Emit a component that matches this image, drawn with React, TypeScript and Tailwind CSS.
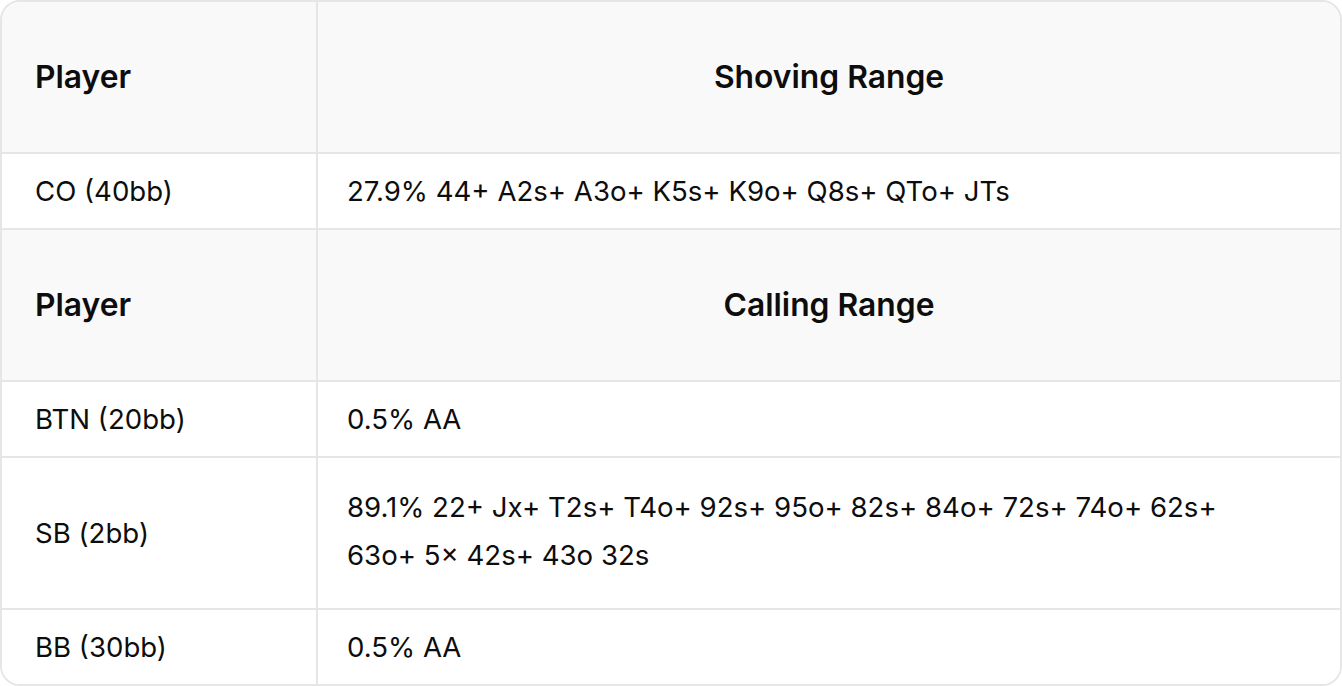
import React from "react";

const font = { fontFamily: "Inter, 'Noto Sans', sans-serif" };

function HeaderRow({ title }: { title: string }) {
  return (
    <div className="grid grid-cols-[314px_2px_1fr] h-[150px] bg-[#f9f9f9]">
      <div className="flex items-center pl-[33px] text-[31.8px] font-semibold text-[#0d0d0d]">Player</div>
      <div className="bg-[#e6e6e6]" />
      <div className="flex items-center justify-center text-[31.8px] font-semibold text-[#0d0d0d]">{title}</div>
    </div>
  );
}

function BodyRow({ player, range, tall }: { player: string; range: string; tall?: boolean }) {
  return (
    <div className={`grid grid-cols-[314px_2px_1fr] bg-white ${tall ? "h-[150px]" : "h-[74px]"}`}>
      <div className="flex items-center pl-[33px] text-[27.6px] leading-[48px] text-[#0d0d0d]">{player}</div>
      <div className="bg-[#e6e6e6]" />
      <div className={`flex items-center pl-[29px] pr-[90px] text-[27.6px] leading-[48px] text-[#0d0d0d] ${tall ? "pb-[4px]" : ""}`}>{range}</div>
    </div>
  );
}

const Divider = () => <div className="h-[2px] bg-[#e6e6e6]" />;

export default function App() {
  return (
    <div className="w-[1342px] h-[686px] bg-white" style={font}>
      <div className="border-2 border-[#e6e6e6] rounded-[20px] overflow-hidden flex flex-col">
        <HeaderRow title="Shoving Range" />
        <Divider />
        <BodyRow player="CO (40bb)" range="27.9% 44+ A2s+ A3o+ K5s+ K9o+ Q8s+ QTo+ JTs" />
        <Divider />
        <HeaderRow title="Calling Range" />
        <Divider />
        <BodyRow player="BTN (20bb)" range="0.5% AA" />
        <Divider />
        <BodyRow
          tall
          player="SB (2bb)"
          range="89.1% 22+ Jx+ T2s+ T4o+ 92s+ 95o+ 82s+ 84o+ 72s+ 74o+ 62s+ 63o+ 5× 42s+ 43o 32s"
        />
        <Divider />
        <BodyRow player="BB (30bb)" range="0.5% AA" />
      </div>
    </div>
  );
}
